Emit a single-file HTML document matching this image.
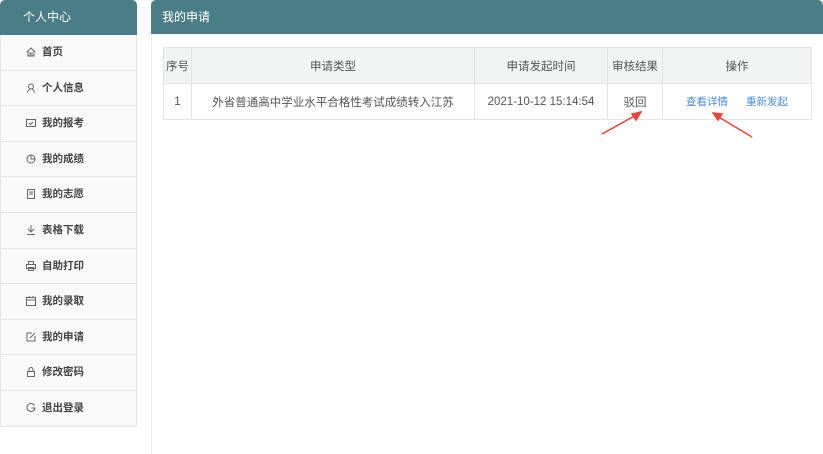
<!DOCTYPE html>
<html><head><meta charset="utf-8"><style>
*{margin:0;padding:0;box-sizing:border-box}
body{width:823px;height:454px;background:#fff;font-family:"Liberation Sans","Noto Sans CJK SC",sans-serif;position:relative;overflow:hidden;color:#555}
.side{position:absolute;left:0;top:0;width:137px;height:427px;background:#f9f9f9;border:1px solid #e6e6e6;border-top:none;border-radius:5px 5px 0 0}
.sh{height:35px;background:#4a7d86;color:#fff;font-size:12px;line-height:35px;padding-left:23px;border-radius:5px 5px 0 0;margin:0 -1px}
.it{height:35.6px;border-bottom:1px solid #e6e6e6;font-size:10.5px;font-weight:bold;color:#444;line-height:35px;padding-left:25px;position:relative}
.it:last-child{border-bottom:none}
.it svg{position:absolute;left:25px;top:12px}
.it span{margin-left:16px}
.main{position:absolute;left:151px;top:0;width:672px;height:454px;border-left:1px solid #eee}
.mh{height:34px;background:#4a7d86;color:#fff;font-size:12px;line-height:34px;padding-left:11px;border-radius:5px 5px 0 0;margin-left:-1px}
table{position:absolute;left:11px;top:47px;border-collapse:collapse;font-size:11.5px;color:#555}
td{border:1px solid #e6e6e6;text-align:center;height:36px;padding:0}
tr:first-child td{background:#f2f4f4}
a{color:#4a8fe0;text-decoration:none;font-size:10.5px;margin:0 9px}
</style></head><body>
<div class="side"><div class="sh">个人中心</div>
<div class="it"><svg width="10" height="10" fill="none" stroke="#666"><path d="M1 5L5 1L9 5M2 4V9H8V4M4 9V6H6V9"/></svg><span>首页</span></div>
<div class="it"><svg width="10" height="10" fill="none" stroke="#666"><circle cx="5" cy="3.5" r="2.5"/><path d="M1 9.5L4 5.5M9 9.5L6 5.5"/></svg><span>个人信息</span></div>
<div class="it"><svg width="10" height="10" fill="none" stroke="#666"><rect x="0.5" y="1.5" width="9" height="7"/><path d="M3 5L4.5 6.5L7 4"/></svg><span>我的报考</span></div>
<div class="it"><svg width="10" height="10" fill="none" stroke="#666"><circle cx="5" cy="5" r="4"/><path d="M5 1V5H9"/></svg><span>我的成绩</span></div>
<div class="it"><svg width="10" height="10" fill="none" stroke="#666"><rect x="1.5" y="0.5" width="7" height="9"/><path d="M3 3H7M3 5H7"/></svg><span>我的志愿</span></div>
<div class="it"><svg width="10" height="10" fill="none" stroke="#666"><path d="M5 0V7M2 4L5 7L8 4M1 9.5H9"/></svg><span>表格下载</span></div>
<div class="it"><svg width="10" height="10" fill="none" stroke="#666"><rect x="2.5" y="0.5" width="5" height="3"/><rect x="0.5" y="3.5" width="9" height="4"/><rect x="2.5" y="6.5" width="5" height="3"/></svg><span>自助打印</span></div>
<div class="it"><svg width="10" height="10" fill="none" stroke="#666"><rect x="0.5" y="1.5" width="9" height="8"/><path d="M0.5 4H9.5M3 0V2M7 0V2"/></svg><span>我的录取</span></div>
<div class="it"><svg width="10" height="10" fill="none" stroke="#666"><path d="M6 1H1V9H9V4M4 6L9 1"/></svg><span>我的申请</span></div>
<div class="it"><svg width="10" height="10" fill="none" stroke="#666"><path d="M3 4V2.5A2 2 0 0 1 7 2.5V4"/><rect x="1.5" y="4.5" width="7" height="5"/></svg><span>修改密码</span></div>
<div class="it"><svg width="10" height="10" fill="none" stroke="#666"><path d="M8.5 2.5A4 4 0 1 0 9 5H5.5"/></svg><span>退出登录</span></div>
</div>
<div class="main"><div class="mh">我的申请</div>
<table>
<tr><td style="width:28px">序号</td><td style="width:283px">申请类型</td><td style="width:133px">申请发起时间</td><td style="width:55px">审核结果</td><td style="width:149px">操作</td></tr>
<tr><td>1</td><td>外省普通高中学业水平合格性考试成绩转入江苏</td><td>2021-10-12 15:14:54</td><td>驳回</td><td><a>查看详情</a><a>重新发起</a></td></tr>
</table>
<svg style="position:absolute;left:0;top:0" width="672" height="160">
<g stroke="#e8443a" stroke-width="1.5" fill="#e8443a">
<line x1="450" y1="134" x2="486" y2="114"/><polygon points="489,112 480,114 484,120"/>
<line x1="600" y1="137" x2="565" y2="116"/><polygon points="561,113 566,120 570,114"/>
</g></svg>
</div>
</body></html>
